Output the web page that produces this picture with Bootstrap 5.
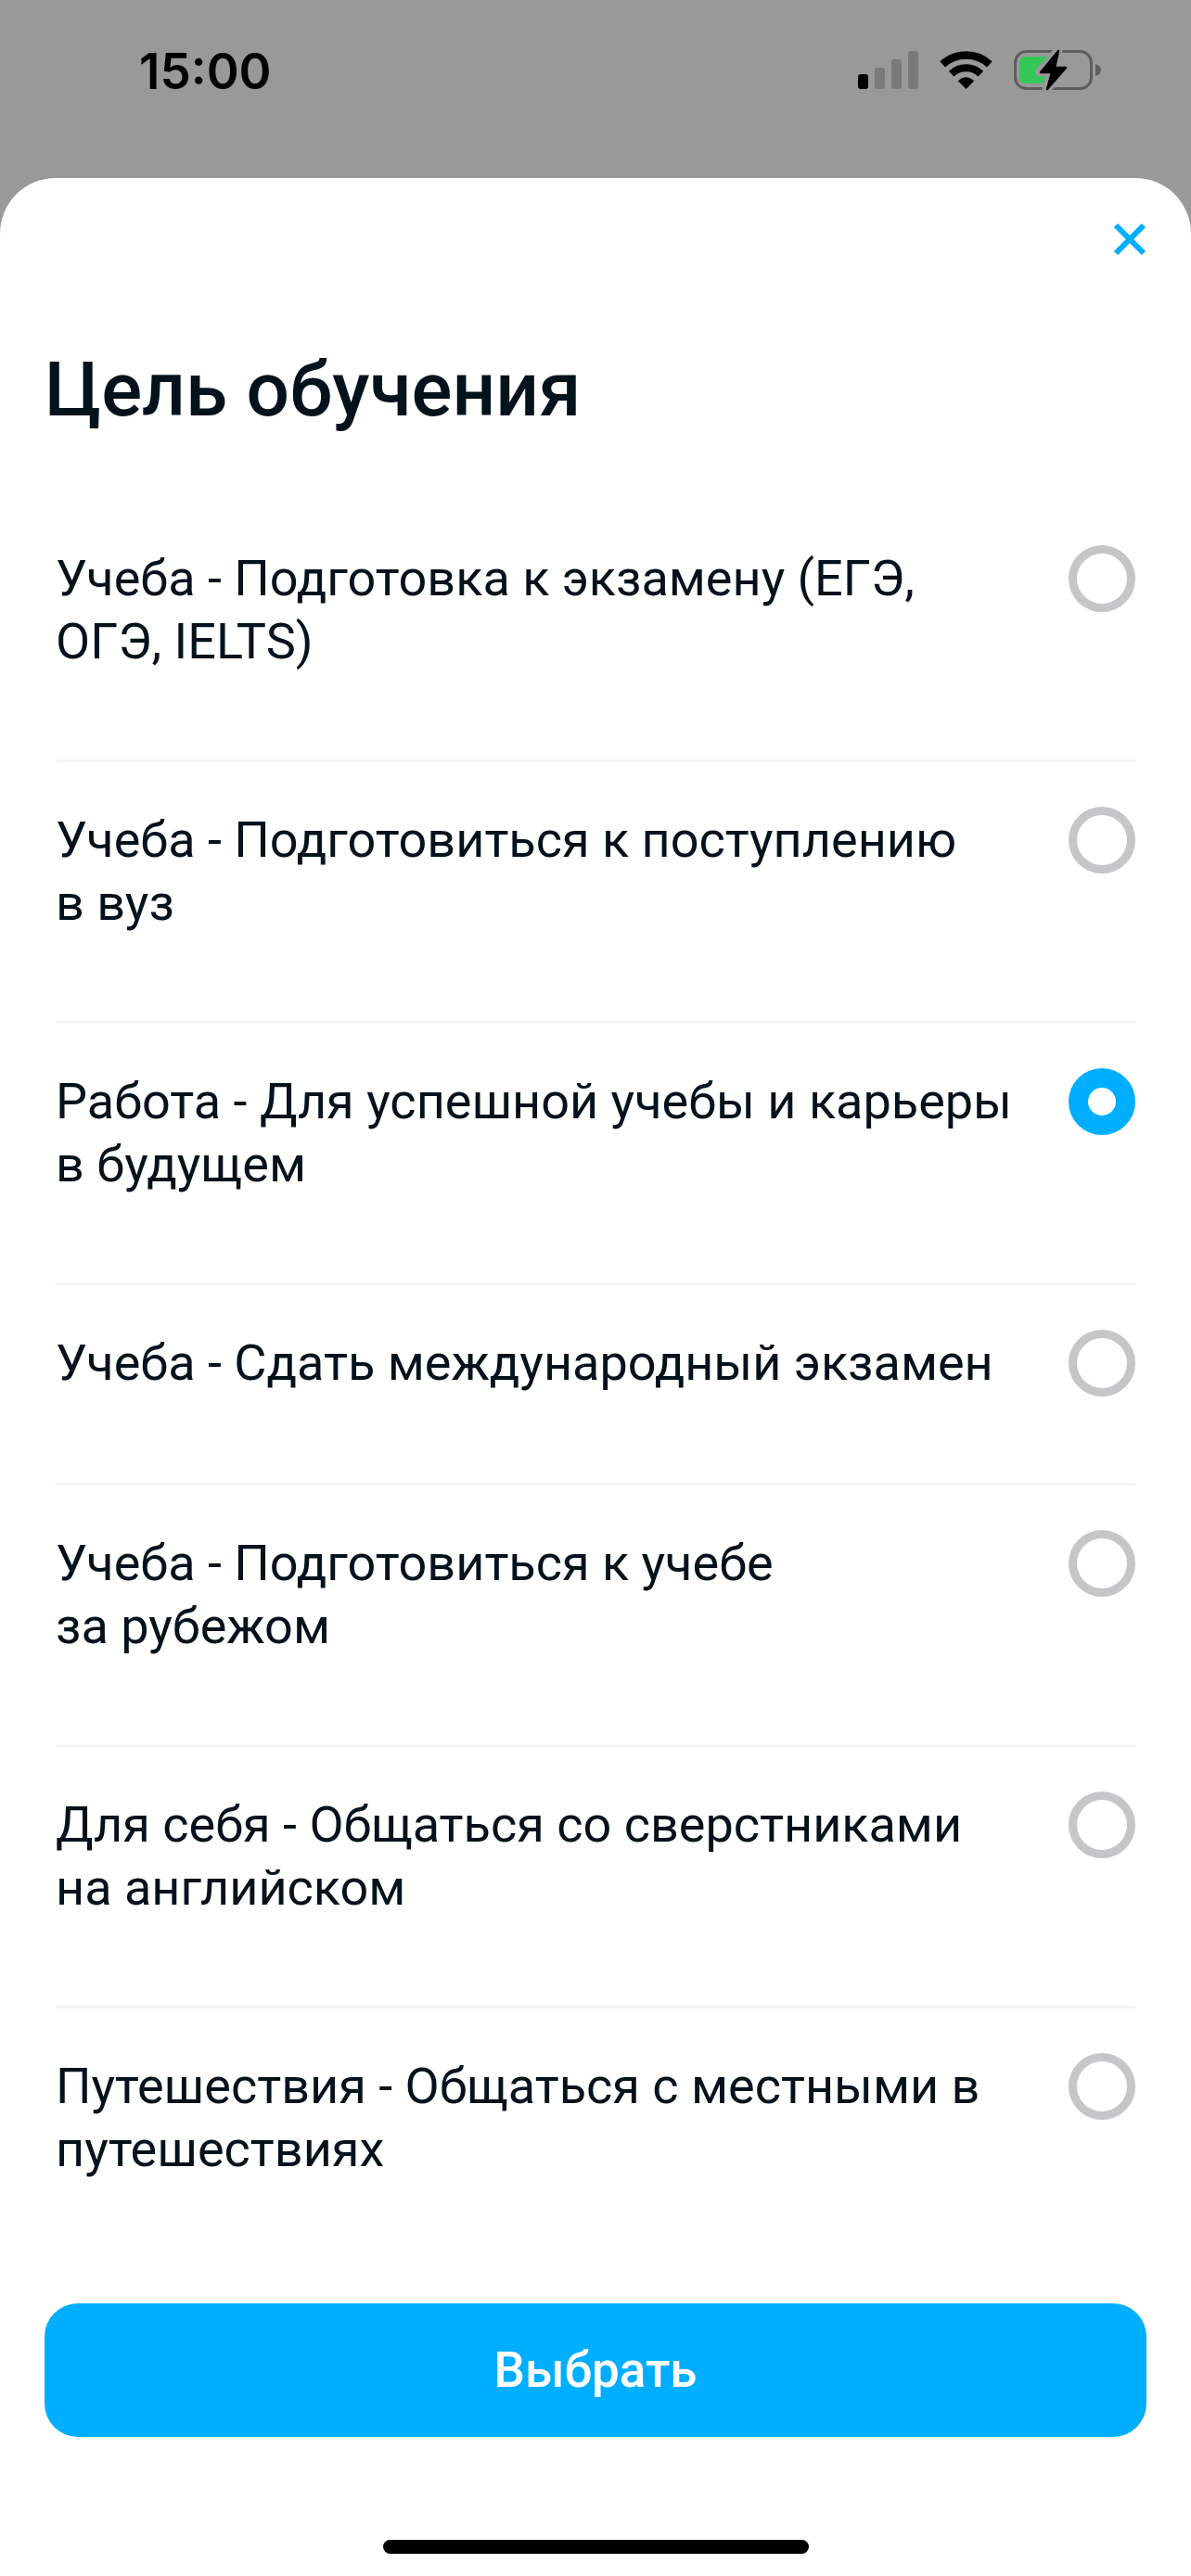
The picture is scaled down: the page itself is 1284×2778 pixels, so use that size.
<!DOCTYPE html>
<html lang="ru">
<head>
<meta charset="utf-8">
<meta name="viewport" content="width=device-width, initial-scale=1">
<title>Цель обучения</title>
<link href="https://cdn.jsdelivr.net/npm/bootstrap@5.3.0/dist/css/bootstrap.min.css" rel="stylesheet">
<style>
  body { background: #999; color: #04121b; font-family: Roboto, "Noto Sans", sans-serif; }
  .status-bar { height: 192px; padding: 52px 96px 0 150px; color: #000; }
  .clock { font: 600 53px/50px Inter, sans-serif; }
  .status-icons { gap: 21px; }
  .sheet { border-radius: 60px 60px 0 0; padding: 48px 48px 24px; }
  .sheet-title { font-size: 82px; line-height: 96px; font-weight: 500; margin: 96px 0 72px; }
  .goal-list { padding: 0 12px; }
  .goal { padding: 48px 0 93px; border-bottom: 3px solid #f3f4f5; cursor: pointer; }
  .goal:last-child { border-bottom: 0; }
  .goal-text { font-size: 54px; line-height: 68px; padding: 2px 0 0; }
  .goal-radio.form-check-input { width: 72px; height: 72px; margin: 0; border: 9px solid #c4c6c8; background: #fff; }
  .goal-radio.form-check-input:checked { border: 21px solid #00aeff; background: #fff; }
  .btn-choose { --bs-btn-bg: #00aeff; --bs-btn-color: #fff; --bs-btn-hover-bg: #009ee8; --bs-btn-hover-color: #fff;
    height: 144px; border: 0; border-radius: 36px; font-size: 53px; line-height: 68px; font-weight: 500; margin-top: 39px; }
  .home-bar { width: 459px; height: 15px; border-radius: 8px; background: #000; }
</style>
</head>
<body class="min-vh-100 d-flex flex-column">
<header class="status-bar d-flex justify-content-between align-items-start">
  <time class="clock">15:00</time>
  <div class="status-icons d-flex">
    <svg width="67" height="48" viewBox="0 0 67 48" aria-hidden="true">
      <rect x="0" y="28" width="11" height="16" rx="3"/>
      <g fill="#7a7a7a"><rect x="18" y="21" width="11" height="23" rx="3"/><rect x="36" y="12" width="11" height="32" rx="3"/><rect x="54" y="3" width="11" height="41" rx="3"/></g>
    </svg>
    <svg width="58" height="48" viewBox="0 0 58 48" aria-hidden="true">
      <path d="M3.200 17.300A37.500 37.500 0 0 1 53.800 17.300" fill="none" stroke="#000" stroke-width="8.500"/>
      <path d="M12.600 27.600A23 23 0 0 1 44.400 27.600" fill="none" stroke="#000" stroke-width="8"/>
      <path d="M28.500 44L19.800 35.300Q28.500 27 37.200 35.300Z"/>
    </svg>
    <svg width="96" height="48" viewBox="0 0 96 48" aria-hidden="true">
      <rect x="2.500" y="3.500" width="82" height="40" rx="12" fill="none" stroke="#5e5e5e" stroke-width="3"/>
      <path d="M89 17Q95 19 95 23.500Q95 28 89 30Z" fill="#5e5e5e"/>
      <path d="M14 9H38V38H14Q7 38 7 31V16Q7 9 14 9Z" fill="#34c759"/>
      <path d="M49 2L28.500 26H40.500L36 45L57 21H45Z" fill="#999" stroke="#999" stroke-width="9" stroke-linejoin="round"/>
      <path d="M49 3L30 26H42L37 44L57 21H45Z" stroke="#000" stroke-width="2.500" stroke-linejoin="round"/>
    </svg>
  </div>
</header>
<main class="sheet bg-white flex-grow-1 d-flex flex-column">
  <div class="d-flex justify-content-end">
    <button type="button" class="btn p-0 border-0 d-flex" aria-label="Закрыть">
      <svg width="36" height="36" viewBox="0 0 36 36" fill="none" stroke="#00aeff" stroke-width="6" stroke-linejoin="round"><path d="M3 3L33 33M33 3L3 33"/></svg>
    </button>
  </div>
  <h1 class="sheet-title">Цель обучения</h1>
  <form class="d-flex flex-column flex-grow-1">
    <div class="goal-list">
      <label class="goal d-flex justify-content-between align-items-start"><span class="goal-text">Учеба - Подготовка к экзамену (ЕГЭ,<br>ОГЭ, IELTS)</span><input class="goal-radio form-check-input flex-shrink-0" type="radio" name="goal"></label>
      <label class="goal d-flex justify-content-between align-items-start"><span class="goal-text">Учеба - Подготовиться к поступлению<br>в вуз</span><input class="goal-radio form-check-input flex-shrink-0" type="radio" name="goal"></label>
      <label class="goal d-flex justify-content-between align-items-start"><span class="goal-text">Работа - Для успешной учебы и карьеры<br>в будущем</span><input class="goal-radio form-check-input flex-shrink-0" type="radio" name="goal" checked></label>
      <label class="goal d-flex justify-content-between align-items-start"><span class="goal-text">Учеба - Сдать международный экзамен</span><input class="goal-radio form-check-input flex-shrink-0" type="radio" name="goal"></label>
      <label class="goal d-flex justify-content-between align-items-start"><span class="goal-text">Учеба - Подготовиться к учебе<br>за рубежом</span><input class="goal-radio form-check-input flex-shrink-0" type="radio" name="goal"></label>
      <label class="goal d-flex justify-content-between align-items-start"><span class="goal-text">Для себя - Общаться со сверстниками<br>на английском</span><input class="goal-radio form-check-input flex-shrink-0" type="radio" name="goal"></label>
      <label class="goal d-flex justify-content-between align-items-start"><span class="goal-text">Путешествия - Общаться с местными в<br>путешествиях</span><input class="goal-radio form-check-input flex-shrink-0" type="radio" name="goal"></label>
    </div>
    <button type="submit" class="btn btn-choose w-100">Выбрать</button>
    <div class="home-bar mt-auto mx-auto"></div>
  </form>
</main>
<script src="https://cdn.jsdelivr.net/npm/bootstrap@5.3.0/dist/js/bootstrap.bundle.min.js"></script>
</body>
</html>
